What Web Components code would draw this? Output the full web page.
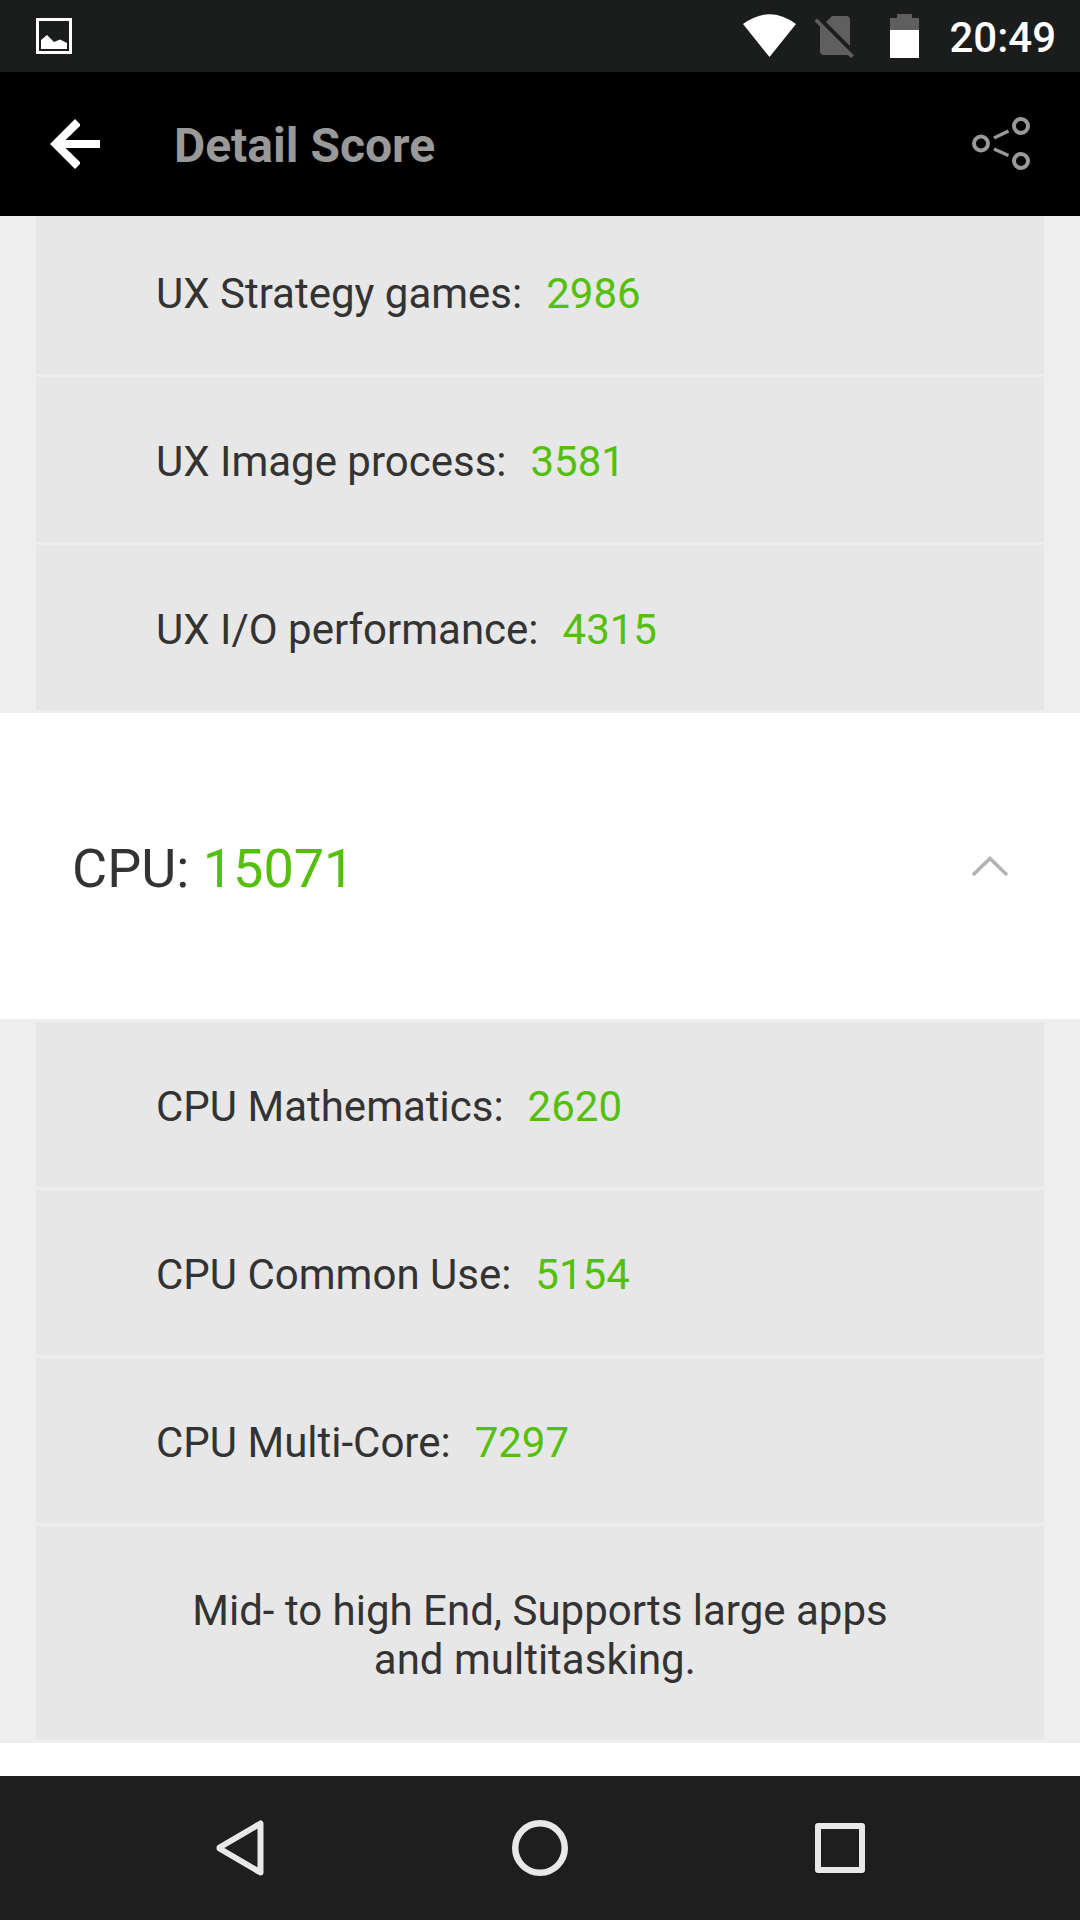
<!DOCTYPE html>
<html lang="en">
<head>
<meta charset="utf-8">
<meta name="viewport" content="width=device-width, initial-scale=1">
<title>Detail Score</title>
<style>
  html, body { margin: 0; height: 100%; }
  body { font-family: Roboto, sans-serif; color: #333; background: #fff; }
</style>
</head>
<body>
<score-app>
  <status-bar slot="status">20:49</status-bar>
  <app-header slot="header">Detail Score</app-header>
  <score-list>
    <score-row value="2986">UX Strategy games:</score-row>
    <score-row value="3581">UX Image process:</score-row>
    <score-row value="4315">UX I/O performance:</score-row>
  </score-list>
  <score-heading value="15071">CPU:</score-heading>
  <score-list divided>
    <score-row value="2620">CPU Mathematics:</score-row>
    <score-row value="5154">CPU Common Use:</score-row>
    <score-row value="7297">CPU Multi-Core:</score-row>
    <score-note>Mid- to high End, Supports large apps and multitasking.&nbsp;</score-note>
  </score-list>
  <list-end></list-end>
  <nav-bar slot="nav"></nav-bar>
</score-app>

<script>
  const define = (name, html, setup) => {
    const template = document.createElement('template');
    template.innerHTML = html;
    customElements.define(name, class extends HTMLElement {
      constructor() {
        super();
        this.attachShadow({ mode: 'open' }).append(template.content.cloneNode(true));
      }
      connectedCallback() {
        if (setup) setup(this, this.shadowRoot);
      }
    });
  };

  const showValue = (el, root) => {
    root.querySelector('.value').textContent = el.getAttribute('value');
  };

  define('status-bar', `
    <style>
      :host { display: flex; align-items: center; height: 72px; padding: 0 24px 0 36px;
              background: #1b1d1c; color: #fff; font-size: 42px; font-weight: 500; line-height: 50px; }
      svg { display: block; flex: none; }
      .tray { display: flex; align-items: center; margin-left: auto; }
      .sim { margin: 0 36px 0 17px; }
      .time { margin-left: 30px; padding-top: 4px; }
    </style>
    <svg width="36" height="36" viewBox="0 0 36 36" aria-hidden="true">
      <rect x="1.5" y="1.5" width="33" height="33" fill="none" stroke="#fff" stroke-width="3"/>
      <path d="M5 31V22L11 17L18 24L24 21.500L31 25V31Z" fill="#fff"/>
    </svg>
    <div class="tray">
      <svg width="54" height="72" viewBox="0 0 54 72" aria-hidden="true">
        <path d="M0 24Q26.500 4.500 53 24L26.500 57Z" fill="#fff"/>
      </svg>
      <svg class="sim" width="40" height="72" viewBox="0 0 40 72" fill="#5f5f5f" aria-hidden="true">
        <path d="M12 22L18 16H32Q36 16 36 20V46Z"/>
        <path d="M.5 21L3 18.500L40 55.500L37 58L34 55H10Q6 55 6 51V26.500Z"/>
      </svg>
      <svg width="29" height="72" viewBox="0 0 29 72" aria-hidden="true">
        <path d="M0 18H7V14H22V18H29V31H0Z" fill="#5f5f5f"/>
        <path d="M0 30H29V58H0Z" fill="#fff"/>
      </svg>
      <span class="time"><slot></slot></span>
    </div>`);

  define('app-header', `
    <style>
      :host { display: flex; align-items: center; height: 144px; padding: 0 50px;
              background: #000; color: #999; }
      button { display: block; flex: none; border: 0; padding: 0; background: none; color: inherit; }
      svg { display: block; }
      h1 { flex: 1; margin: 0 0 0 74px; padding-top: 4px; font-size: 48px; line-height: 56px; font-weight: 700; }
    </style>
    <button type="button" aria-label="Back">
      <svg width="50" height="50" viewBox="0 0 50 50" fill="#fff">
        <path d="M25 0L30 5V7L15.500 21H50V29H15.500L30 43V45L25 50L0 25Z"/>
      </svg>
    </button>
    <h1><slot></slot></h1>
    <button type="button" aria-label="Share">
      <svg width="58" height="54" viewBox="0 0 58 54" fill="none" stroke="currentColor">
        <g stroke-width="4">
          <circle cx="9" cy="26.500" r="7"/><circle cx="49" cy="9" r="7"/><circle cx="49" cy="44" r="7"/>
        </g>
        <path d="M22 21L36.500 14M22 32L36.500 38.500" stroke-width="3.5"/>
      </svg>
    </button>`);

  define('score-list', `
    <style>
      :host { display: block; padding: 0 36px; background: #eee; }
      :host([divided]) { padding-top: 3px; }
    </style>
    <slot></slot>`);

  define('score-row', `
    <style>
      :host { display: flex; gap: 24px; padding: 60px 120px 56px; border-bottom: 3px solid #eee;
              background: #e7e7e7; font-size: 42px; line-height: 49px; }
      .value { color: #54c00c; }
    </style>
    <span><slot></slot></span><span class="value"></span>`, showValue);

  define('score-note', `
    <style>
      :host { display: block; padding: 60px 120px 56px; border-bottom: 3px solid #eee;
              background: #e7e7e7; font-size: 42px; line-height: 49px; text-align: center; }
    </style>
    <slot></slot>`);

  define('score-heading', `
    <style>
      :host { display: block; background: #fff; }
      button { display: flex; align-items: center; justify-content: space-between; width: 100%;
               border: 0; padding: 124px 72px 119px; background: none; text-align: left;
               color: inherit; font: inherit; font-size: 54px; line-height: 63px; }
      .value { color: #54c00c; }
      svg { display: block; }
    </style>
    <button type="button" aria-expanded="true">
      <span><slot></slot> <span class="value"></span></span>
      <svg width="36" height="26" viewBox="0 0 36 26" fill="none" stroke="#b3b3b3" stroke-width="3.5" aria-hidden="true">
        <path d="M1 19L18 2.500L35 19"/>
      </svg>
    </button>`, showValue);

  define('list-end', `<style>:host { display: block; height: 120px; background: #fff; }</style>`);

  define('nav-bar', `
    <style>
      :host { display: block; background: #1e1e1e; }
      nav { display: flex; height: 144px; padding: 0 90px; }
      button { flex: 1; display: flex; align-items: center; justify-content: center;
               border: 0; padding: 0; background: none; }
      svg { display: block; fill: none; stroke: #e8e8e8; stroke-width: 6; stroke-linejoin: round; }
    </style>
    <nav>
      <button type="button" aria-label="Back">
        <svg width="48" height="56" viewBox="0 0 48 56"><path d="M44.500 3.500V52.500L3.500 28.500V27.500Z"/></svg>
      </button>
      <button type="button" aria-label="Home">
        <svg width="56" height="56" viewBox="0 0 56 56"><circle cx="28" cy="28" r="24.750" stroke-width="6.500"/></svg>
      </button>
      <button type="button" aria-label="Recent apps">
        <svg width="50" height="50" viewBox="0 0 50 50"><rect x="3" y="3" width="44" height="44"/></svg>
      </button>
    </nav>`);

  define('score-app', `
    <style>
      :host { display: flex; flex-direction: column; height: 100vh; }
      main { flex: 1; min-height: 0; overflow-y: auto; scrollbar-width: none; }
    </style>
    <slot name="status"></slot>
    <slot name="header"></slot>
    <main><slot></slot></main>
    <slot name="nav"></slot>`, (el, root) => {
      /* The list opens slightly scrolled, with its first row partly under the header. */
      root.querySelector('main').scrollTop = 7;
    });
</script>
</body>
</html>
